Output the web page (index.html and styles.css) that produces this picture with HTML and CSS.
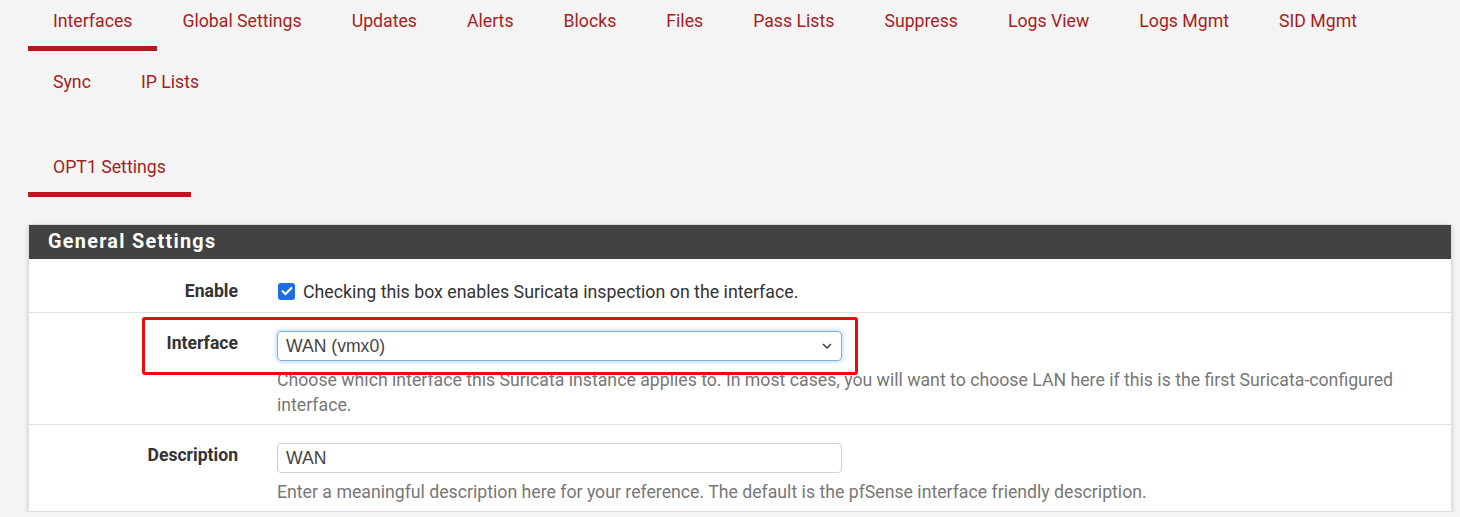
FILE: index.html
```html
<!DOCTYPE html>
<html lang="en">
<head>
<meta charset="utf-8">
<title>Suricata: Interface Settings</title>
<link rel="stylesheet" href="styles.css">
</head>
<body>
<div class="page">
  <nav class="tabs">
    <a class="tab active">Interfaces</a>
    <a class="tab">Global Settings</a>
    <a class="tab">Updates</a>
    <a class="tab">Alerts</a>
    <a class="tab">Blocks</a>
    <a class="tab">Files</a>
    <a class="tab">Pass Lists</a>
    <a class="tab">Suppress</a>
    <a class="tab">Logs View</a>
    <a class="tab">Logs Mgmt</a>
    <a class="tab">SID Mgmt</a>
    <a class="tab">Sync</a>
    <a class="tab">IP Lists</a>
  </nav>
  <nav class="tabs subtabs">
    <a class="tab active">OPT1 Settings</a>
  </nav>
  <section class="panel">
    <h2 class="panel-heading">General Settings</h2>
    <div class="panel-body">
      <div class="form-row row-enable">
        <div class="label">Enable</div>
        <div class="field">
          <label class="check">
            <span class="checkbox"><svg viewBox="0 0 16 16" width="16" height="16"><path d="M3.6 8.2 L6.6 11.1 L12.4 5.1" fill="none" stroke="#fff" stroke-width="2.2" stroke-linecap="round" stroke-linejoin="round"/></svg></span>
            <span>Checking this box enables Suricata inspection on the interface.</span>
          </label>
        </div>
      </div>
      <div class="form-row">
        <div class="label">Interface</div>
        <div class="field">
          <div class="select">
            <span>WAN (vmx0)</span>
            <svg class="chev" viewBox="0 0 10 6" width="10" height="6"><path d="M1 1 L5 5 L9 1" fill="none" stroke="#333" stroke-width="1.4"/></svg>
          </div>
          <p class="help">Choose which interface this Suricata instance applies to. In most cases, you will want to choose LAN here if this is the first Suricata-configured interface.</p>
        </div>
        <div class="highlight"></div>
      </div>
      <div class="form-row">
        <div class="label">Description</div>
        <div class="field">
          <div class="input">WAN</div>
          <p class="help">Enter a meaningful description here for your reference. The default is the pfSense interface friendly description.</p>
        </div>
      </div>
    </div>
  </section>
</div>
</body>
</html>
```
FILE: styles.css
```css
* { box-sizing: border-box; }
html, body { margin: 0; padding: 0; }
body {
  background: #f4f4f4;
  font-family: Roboto, "Noto Sans", Arial, sans-serif;
  color: #333;
  overflow: hidden;
}
.page {
  padding: 0 8px 0 28px;
}
.tabs {
  display: flex;
  flex-wrap: wrap;
  row-gap: 10px;
}
.tab {
  display: block;
  padding: 9px 25px 13px;
  font-size: 17.7px;
  line-height: 24px;
  color: #a41e22;
  border-bottom: 5px solid transparent;
  cursor: pointer;
}
.tab.active {
  border-bottom-color: #b01c20;
}
.subtabs {
  margin-top: 34px;
}
.panel {
  margin-top: 27px;
  background: #fff;
  border: 1px solid #dcdcdc;
  box-shadow: 0 2px 5px rgba(0,0,0,0.15);
}
.panel-heading {
  margin: 0;
  height: 34px;
  background: #424242;
  color: #fff;
  font-size: 19.8px;
  font-weight: 700;
  letter-spacing: 1.3px;
  line-height: 34px;
  padding-left: 19px;
}
.form-row {
  position: relative;
  display: grid;
  grid-template-columns: 209px 1fr;
  column-gap: 39px;
  padding: 18px 41px 6px 0;
  border-bottom: 1px solid #e2e2e2;
}
.form-row:last-child { border-bottom: none; }
.row-enable { padding: 17px 41px 6px 0; }
.label {
  text-align: right;
  font-weight: 700;
  font-size: 17.6px;
  line-height: 25px;
  color: #333;
}
.row-enable .label { line-height: 30px; }
.check {
  display: flex;
  align-items: center;
  height: 30px;
  font-size: 17.8px;
  color: #333;
}
.checkbox {
  width: 17px;
  height: 17px;
  margin: 0 8px 0 1px;
  border-radius: 3px;
  background: #1a6fe0;
  display: flex;
  align-items: center;
  justify-content: center;
}
.select, .input {
  width: 565px;
  height: 30px;
  border-radius: 4px;
  font-family: "Liberation Sans", Arial, sans-serif;
  font-size: 17.6px;
  color: #444;
  display: flex;
  align-items: center;
  padding-left: 8px;
}
.select {
  border: 1px solid #7fb0d8;
  box-shadow: 0 0 4px 1px rgba(102,175,233,0.45);
  justify-content: space-between;
  padding-right: 9px;
}
.input {
  border: 1px solid #cfcfcf;
}
.help {
  margin: 7px 0 0;
  font-size: 17.7px;
  line-height: 25px;
  color: #777;
}
.highlight {
  position: absolute;
  left: 113px;
  top: 4px;
  width: 716px;
  height: 58px;
  border: 3px solid #ee0a0a;
  border-radius: 3px;
  pointer-events: none;
}
```
